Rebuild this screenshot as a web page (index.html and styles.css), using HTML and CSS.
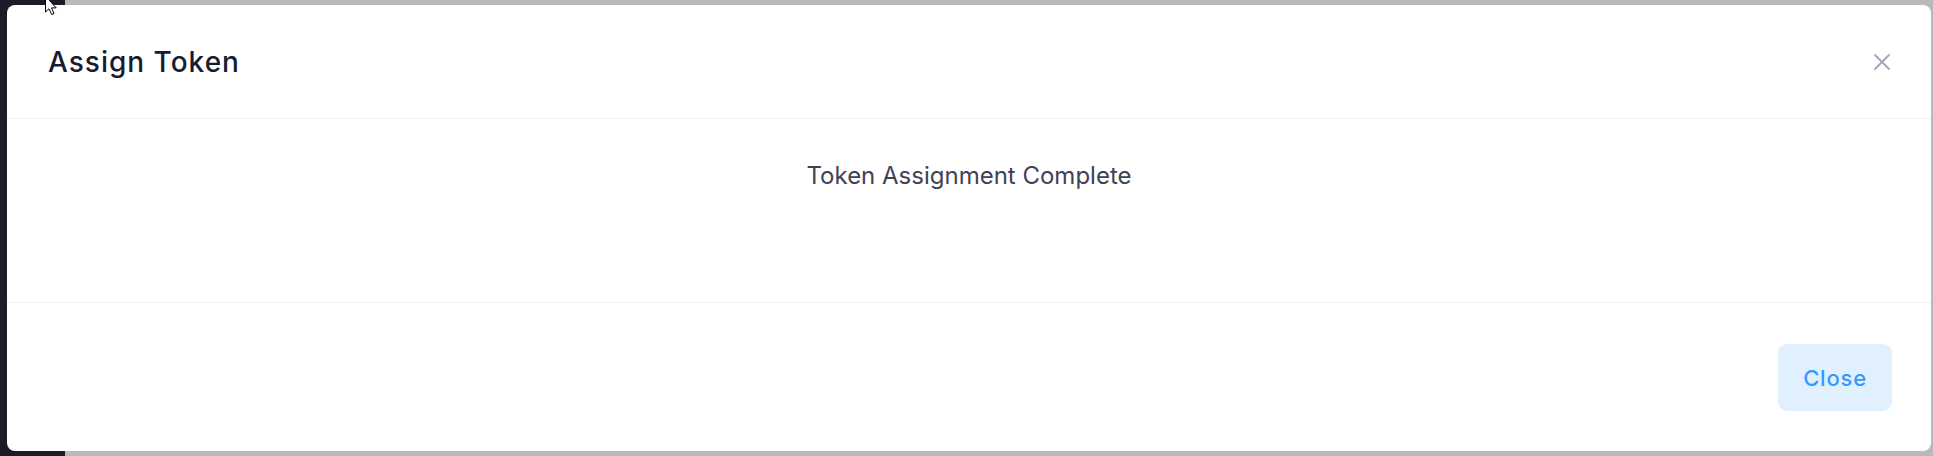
FILE: index.html
```html
<!DOCTYPE html>
<html lang="en">
<head>
<meta charset="utf-8">
<title>Assign Token</title>
<link rel="stylesheet" href="styles.css">
</head>
<body>
<div class="backdrop">
  <div class="modal">
    <div class="modal-header">
      <h5 class="modal-title">Assign Token</h5>
      <button class="btn-close" aria-label="Close">
        <svg width="18" height="18" viewBox="0 0 18 18"><path d="M2 2 L16 16 M16 2 L2 16" stroke="#a1a5b7" stroke-width="1.8" stroke-linecap="round" fill="none"/></svg>
      </button>
    </div>
    <div class="modal-body">
      <p class="message">Token Assignment Complete</p>
    </div>
    <div class="modal-footer">
      <button class="btn-light-primary">Close</button>
    </div>
  </div>
  <svg class="cursor" width="20" height="18" viewBox="0 0 20 18"><path d="M1.5 -4 L1.5 12 L5 8.8 L7.6 14.5 L10 13.4 L7.5 7.9 L12.2 7.9 Z" fill="#fff" stroke="#000" stroke-width="1" stroke-linejoin="round"/></svg>
</div>
</body>
</html>
```
FILE: styles.css
```css
* { box-sizing: border-box; }
html, body { margin: 0; padding: 0; }
body {
  font-family: "Inter", "Liberation Sans", sans-serif;
  width: 1933px;
  height: 456px;
  overflow: hidden;
}
.backdrop {
  position: relative;
  width: 1933px;
  height: 456px;
  background: linear-gradient(to right, #1b1c28 0, #1b1c28 65px, #b9b9b9 65px);
  padding: 5px 2px 5px 7px;
}
.modal {
  background: #fff;
  border-radius: 8px;
  height: 446px;
  display: flex;
  flex-direction: column;
}
.modal-header {
  height: 114px;
  border-bottom: 1px solid #eff2f5;
  display: flex;
  align-items: center;
  justify-content: space-between;
  padding: 0 39px 0 41px;
}
.modal-title {
  margin: 0;
  font-size: 28px;
  font-weight: 500;
  letter-spacing: 1px;
  color: #181c32;
}
.btn-close {
  background: none;
  border: 0;
  padding: 0;
  width: 20px;
  height: 20px;
  display: flex;
  align-items: center;
  justify-content: center;
}
.modal-body {
  height: 184px;
  border-bottom: 1px solid #eff2f5;
  padding: 42px 41px 0;
}
.message {
  margin: 0;
  text-align: center;
  font-size: 24px;
  color: #3f4254;
}
.modal-footer {
  flex: 1;
  display: flex;
  justify-content: flex-end;
  align-items: flex-start;
  padding: 41px 39px 0;
}
.btn-light-primary {
  font-family: inherit;
  width: 114px;
  height: 67px;
  border: 0;
  border-radius: 9px;
  background: #e1f0ff;
  color: #3699ff;
  font-size: 22px;
  font-weight: 500;
  letter-spacing: 0.8px;
}
.cursor {
  position: absolute;
  left: 44px;
  top: 0;
}
```
